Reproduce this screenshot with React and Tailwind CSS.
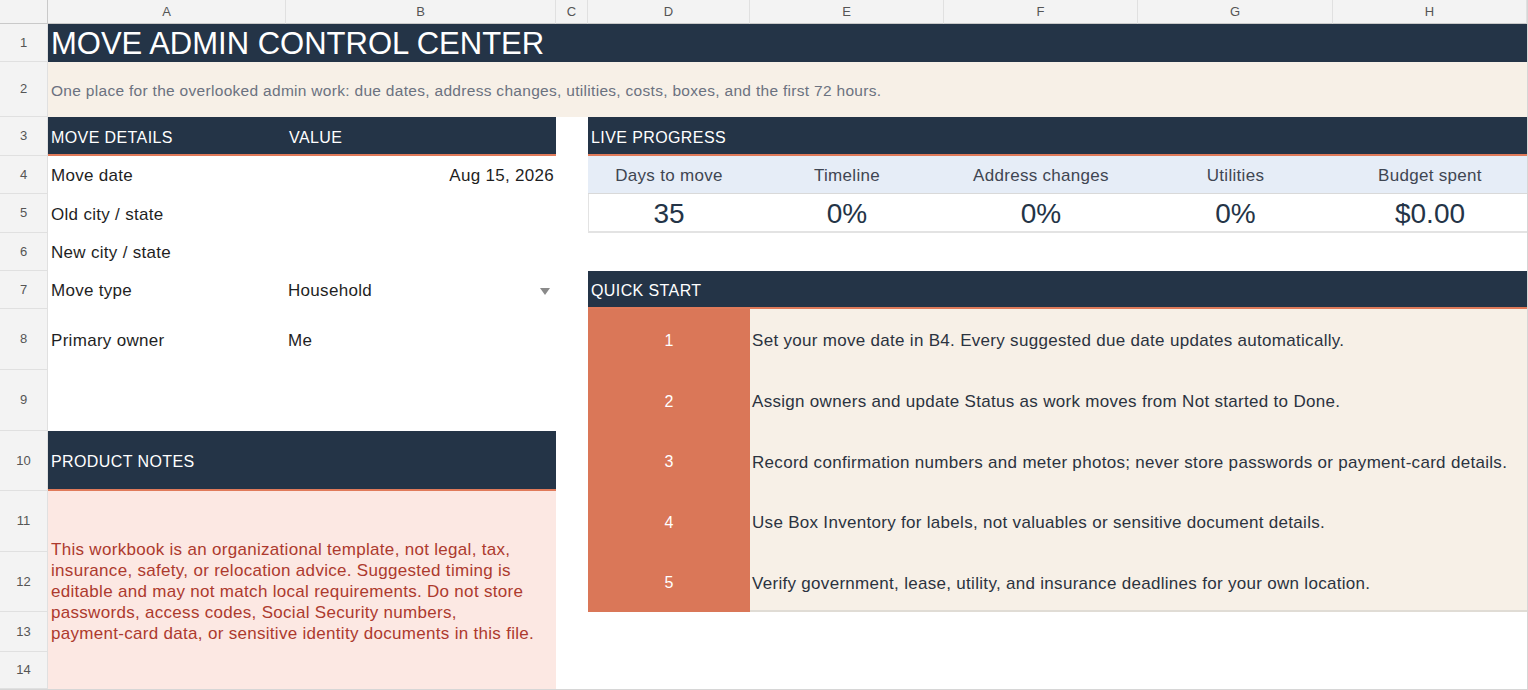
const font = { fontFamily: '"Liberation Sans", Arial, sans-serif' };

const cols = ['A', 'B', 'C', 'D', 'E', 'F', 'G', 'H'];
const rows = [1, 2, 3, 4, 5, 6, 7, 8, 9, 10, 11, 12, 13, 14];

const progress = [
  { label: 'Days to move', value: '35', col: 'col-start-5' },
  { label: 'Timeline', value: '0%', col: 'col-start-6' },
  { label: 'Address changes', value: '0%', col: 'col-start-7' },
  { label: 'Utilities', value: '0%', col: 'col-start-8' },
  { label: 'Budget spent', value: '$0.00', col: 'col-start-9' },
];

const details = [
  { label: 'Move date', value: 'Aug 15, 2026', row: 'row-start-5', right: true },
  { label: 'Old city / state', value: '', row: 'row-start-6' },
  { label: 'New city / state', value: '', row: 'row-start-7' },
  { label: 'Move type', value: 'Household', row: 'row-start-8', dropdown: true },
  { label: 'Primary owner', value: 'Me', row: 'row-start-9' },
];

const steps = [
  { n: 1, row: 'row-start-9', text: 'Set your move date in B4. Every suggested due date updates automatically.' },
  { n: 2, row: 'row-start-10', text: 'Assign owners and update Status as work moves from Not started to Done.' },
  { n: 3, row: 'row-start-11', text: 'Record confirmation numbers and meter photos; never store passwords or payment-card details.' },
  { n: 4, row: 'row-start-12', text: 'Use Box Inventory for labels, not valuables or sensitive document details.' },
  { n: 5, row: 'row-start-13', text: 'Verify government, lease, utility, and insurance deadlines for your own location.' },
];

const rowStarts = [
  'row-start-2', 'row-start-3', 'row-start-4', 'row-start-5', 'row-start-6', 'row-start-7', 'row-start-8',
  'row-start-9', 'row-start-10', 'row-start-11', 'row-start-12', 'row-start-13', 'row-start-14', 'row-start-15',
];
const colStarts = ['col-start-2', 'col-start-3', 'col-start-4', 'col-start-5', 'col-start-6', 'col-start-7', 'col-start-8', 'col-start-9'];

// section header cell: navy with orange underline
const head = 'flex items-center bg-[#243447] border-b-2 border-[#e07a5a] px-[3px] pt-[4px] text-[16px] tracking-[0.4px] text-white';
const body = 'text-[17px] tracking-[0.3px]';

export default function App() {
  return (
    <div
      className="grid w-[1528px] h-[690px] bg-white overflow-hidden border-r border-b border-[#d6d6d6] grid-cols-[48px_238px_270px_32px_162px_194px_194px_195px_194px] grid-rows-[24px_38px_55px_39px_38px_39px_38px_38px_61px_61px_60px_61px_60px_40px_37px]"
      style={font}
    >
      {/* corner + column headers */}
      <div className="col-start-1 row-start-1 bg-[#f3f3f3] border-r border-b border-[#c9c9c9]" />
      {cols.map((c, i) => (
        <div
          key={c}
          className={`${colStarts[i]} row-start-1 flex items-center justify-center bg-[#f3f3f3] border-r border-b border-r-[#e0e0e0] border-b-[#c9c9c9] text-[13px] text-[#555]`}
        >
          {c}
        </div>
      ))}

      {/* row headers */}
      {rows.map((r, i) => (
        <div
          key={r}
          className={`col-start-1 ${rowStarts[i]} flex items-center justify-center bg-[#f3f3f3] border-r border-b border-[#e0e0e0] text-[13px] text-[#555]`}
        >
          {r}
        </div>
      ))}

      {/* title */}
      <div className="col-start-2 col-span-8 row-start-2 flex items-center bg-[#243447] px-[3px] text-[31px] text-white leading-none">
        MOVE ADMIN CONTROL CENTER
      </div>
      <div className="col-start-2 col-span-8 row-start-3 flex items-center bg-[#f7f0e7] px-[3px] pt-[2px] text-[15.5px] tracking-[0.3px] text-[#6b7280]">
        One place for the overlooked admin work: due dates, address changes, utilities, costs, boxes, and the first 72 hours.
      </div>

      {/* move details */}
      <div className={`col-start-2 row-start-4 ${head}`}>MOVE DETAILS</div>
      <div className={`col-start-3 row-start-4 ${head} px-[2px]`}>VALUE</div>
      {details.map((d) => (
        <div key={d.label} className="contents">
          <div className={`col-start-2 ${d.row} flex items-center px-[3px] pt-[2px] ${body} text-[#1f1f1f]`}>{d.label}</div>
          <div
            className={`col-start-3 ${d.row} flex items-center px-[2px] pt-[2px] ${body} text-[#1f1f1f] ${d.right ? 'justify-end' : 'justify-between'}`}
          >
            <span>{d.value}</span>
            {d.dropdown && (
              <svg width="10" height="7" viewBox="0 0 10 7" className="mr-[4px]">
                <path d="M0 0h10L5 7z" fill="#8a8a8a" />
              </svg>
            )}
          </div>
        </div>
      ))}

      {/* product notes */}
      <div className={`col-start-2 col-span-2 row-start-11 ${head}`}>PRODUCT NOTES</div>
      <div className={`col-start-2 col-span-2 row-start-12 row-span-4 flex items-center bg-[#fce8e3] px-[3px] pt-[2px] ${body} leading-[21px] text-[#ad3a2e]`}>
        <p>
          This workbook is an organizational template, not legal, tax,
          <br />
          insurance, safety, or relocation advice. Suggested timing is
          <br />
          editable and may not match local requirements. Do not store
          <br />
          passwords, access codes, Social Security numbers,
          <br />
          payment-card data, or sensitive identity documents in this file.
        </p>
      </div>

      {/* live progress */}
      <div className={`col-start-5 col-span-5 row-start-4 ${head}`}>LIVE PROGRESS</div>
      <div className="col-start-5 col-span-5 row-start-5 bg-[#e6edf7] border-b border-[#d9d9d9]" />
      <div className="col-start-5 col-span-5 row-start-6 border-l border-b-2 border-[#e3e3e3]" />
      {progress.map((p) => (
        <div key={p.label} className="contents">
          <div className={`${p.col} row-start-5 z-10 flex items-center justify-center pt-[2px] ${body} text-[#3f4652]`}>{p.label}</div>
          <div className={`${p.col} row-start-6 z-10 flex items-center justify-center text-[28px] text-[#243447]`}>{p.value}</div>
        </div>
      ))}

      {/* quick start */}
      <div className={`col-start-5 col-span-5 row-start-8 ${head}`}>QUICK START</div>
      <div className="col-start-6 col-span-4 row-start-9 row-span-5 bg-[#f7f0e7] border-b-2 border-[#e0dcd5]" />
      <div className="col-start-5 row-start-9 row-span-5 bg-[#da7758]" />
      {steps.map((s) => (
        <div key={s.n} className="contents">
          <div className={`col-start-5 ${s.row} z-10 flex items-center justify-center pt-[2px] text-[16px] text-white`}>{s.n}</div>
          <div className={`col-start-6 col-span-4 ${s.row} z-10 flex items-center px-[2px] pt-[3px] ${body} text-[#2b3340] whitespace-nowrap`}>
            {s.text}
          </div>
        </div>
      ))}
    </div>
  );
}
